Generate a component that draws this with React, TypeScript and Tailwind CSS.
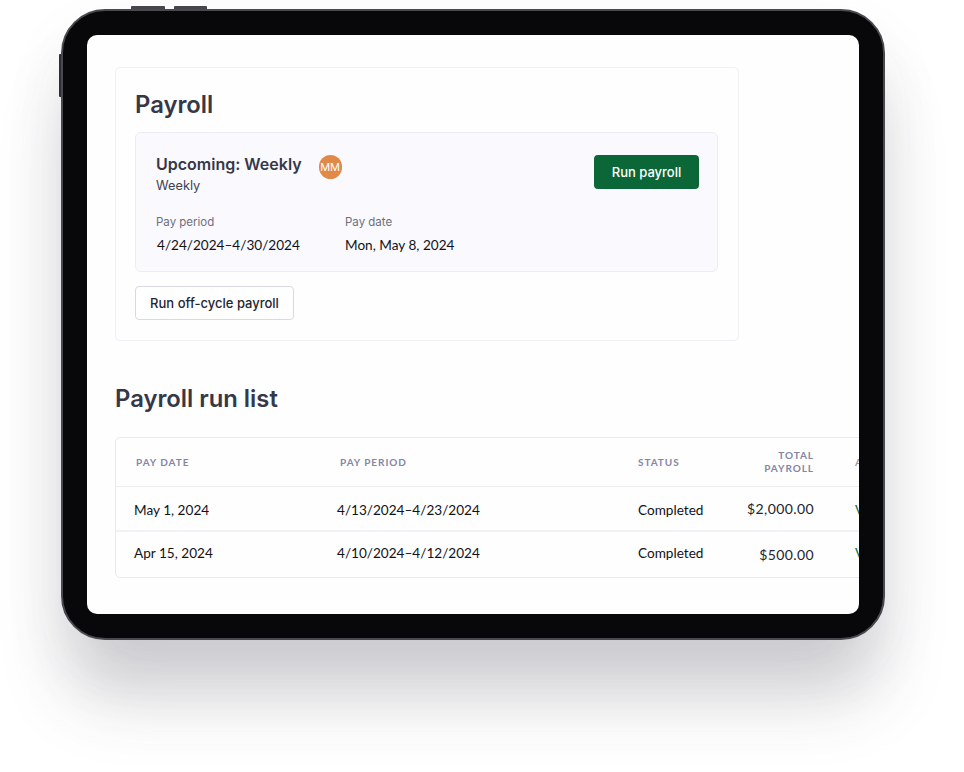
const lato = "font-['Lato','Liberation_Sans',sans-serif]";

function Row({ date, period, total, last, textClass, amountClass }: { date: string; period: string; total: string; last?: boolean; textClass: string; amountClass: string }) {
  return (
    <div className={`grid grid-cols-[203px_301px_108px_68px_100px] items-center pl-[18px] h-[45px] text-[13.6px] text-[#101218] ${lato} ${last ? "" : "border-b-2 border-[#f1f1f6]"}`}>
      <span className={textClass}>{date}</span>
      <span className={textClass}>{period}</span>
      <span className={textClass}>Completed</span>
      <span className={`text-right text-[14px] tracking-[0.4px] text-[#22242c] ${amountClass}`}>{total}</span>
      <span className={`pl-[41px] text-[#0b6b3d] ${textClass}`}>View</span>
    </div>
  );
}

export default function App() {
  return (
    <div className="w-[964px] h-[772px] bg-white overflow-hidden pt-[9px] pl-[61px] font-['Inter',sans-serif]">
      <div className="relative w-[824px] h-[631px] rounded-[44px] bg-[#08070a] border-2 border-[#4a494f] p-[24px] shadow-[0_65px_70px_-10px_rgba(60,58,75,0.22),0_30px_65px_0_rgba(60,58,75,0.07)]">
        <div className="absolute left-[-4px] top-[43px] w-[2px] h-[43px] bg-[#2e2d32] rounded-l-[1px]" />
        <div className="absolute left-[68px] top-[-5px] w-[34px] h-[3px] bg-[#47464c] rounded-t-[1px]" />
        <div className="absolute left-[111px] top-[-5px] w-[33px] h-[3px] bg-[#47464c] rounded-t-[1px]" />
        <div className="w-[772px] h-[579px] bg-[#fefefe] rounded-[10px] overflow-hidden pt-[32px] pl-[28px]">
          <section className="w-[624px] h-[274px] rounded-[5px] border border-[#efeff5] px-[19px] pt-[20px]">
            <h1 className="text-[23.8px] leading-[34px] font-semibold text-[#363848]">Payroll</h1>
            <div className="mt-[10px] w-[583px] h-[140px] rounded-[6px] border border-[#ececf4] bg-[#f9f9fe] pl-[20px] pr-[18px] pt-[19px]">
              <div className="flex justify-between">
                <div>
                  <div className="flex items-center h-[24px]">
                    <h2 className="text-[16px] leading-[22px] font-semibold text-[#363848]">Upcoming: Weekly</h2>
                    <span className="ml-[17px] translate-y-[3px] w-[23px] h-[24px] rounded-full bg-[#e18a48] text-white text-[11px] flex items-center justify-center">MM</span>
                  </div>
                  <p className="text-[12.8px] leading-[18px] mt-[1px] text-[#40424f]">Weekly</p>
                </div>
                <button className="w-[105px] h-[34px] mt-[3px] pt-[1px] rounded-[4px] bg-[#0b6638] text-white text-[13px] font-medium">Run payroll</button>
              </div>
              <div className="flex mt-[18px]">
                <div className="w-[189px]">
                  <p className="text-[11.5px] leading-[18px] text-[#6e6f7c]">Pay period</p>
                  <p className={`mt-[4px] pl-[1px] text-[13.6px] leading-[20px] text-[#101218] ${lato}`}>4/24/2024–4/30/2024</p>
                </div>
                <div>
                  <p className="text-[11.5px] leading-[18px] text-[#6e6f7c]">Pay date</p>
                  <p className={`mt-[4px] text-[13.6px] leading-[20px] text-[#101218] ${lato}`}>Mon, May 8, 2024</p>
                </div>
              </div>
            </div>
            <button className="mt-[14px] w-[159px] h-[34px] pt-[1px] rounded-[4px] border border-[#d9d9e3] bg-white text-[13px] font-medium text-[#25262f]">Run off-cycle payroll</button>
          </section>
          <h2 className="mt-[41px] text-[23.8px] leading-[34px] font-semibold text-[#363848]">Payroll run list</h2>
          <div className="mt-[21px] w-[900px] h-[141px] rounded-[5px] border border-[#e9e9ef]">
            <div className={`grid grid-cols-[204px_298px_110px_66px_100px] items-center pl-[20px] h-[49px] border-b border-[#ededf3] text-[10px] leading-[13.5px] font-bold tracking-[0.95px] text-[#8585a5] ${lato}`}>
              <span className="mt-[2px]">PAY DATE</span>
              <span className="mt-[2px]">PAY PERIOD</span>
              <span className="mt-[2px]">STATUS</span>
              <span className="text-right whitespace-pre-line -ml-[30px]">{"TOTAL\nPAYROLL"}</span>
              <span className="pl-[41px] mt-[2px] text-[#9a9aa8]">ACTION</span>
            </div>
            <Row date="May 1, 2024" period="4/13/2024–4/23/2024" total="$2,000.00" textClass="translate-y-[2px]" amountClass="" />
            <Row date="Apr 15, 2024" period="4/10/2024–4/12/2024" total="$500.00" last textClass="-translate-y-[1px]" amountClass="" />
          </div>
        </div>
      </div>
    </div>
  );
}
